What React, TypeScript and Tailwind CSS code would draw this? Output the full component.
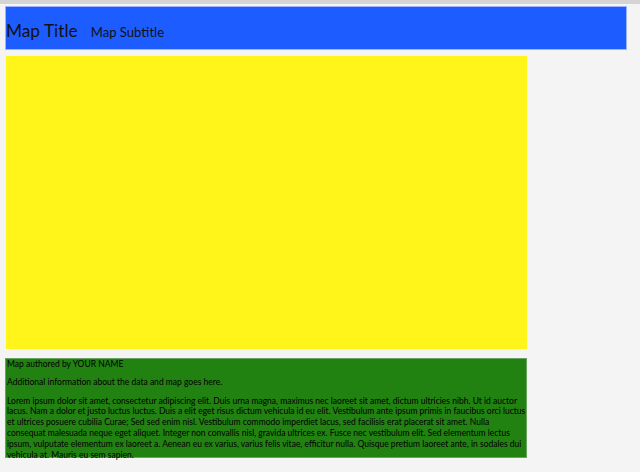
export default function App() {
  return (
    <div className="min-h-[472px] bg-[#f4f4f4] font-['Lato','Open_Sans',sans-serif] text-[#111]">
      <div className="h-[4px] bg-[#d4d4d4]" />
      <div className="px-[5px] pt-[2px]">
        {/* Header */}
        <header className="flex h-[44px] w-[622px] items-baseline gap-[13px] border border-[#9fb2ff] bg-[#1d5cff] pt-[15px]">
          <h1 className="text-[17.3px] leading-none">Map Title</h1>
          <h2 className="text-[13.1px] leading-none">Map Subtitle</h2>
        </header>

        {/* Map */}
        <div className="ml-[1px] mt-[6px] h-[293px] w-[521px] bg-[#fff51a]" />

        {/* Info */}
        <div className="mt-[9px] h-[100px] w-[522px] border border-[#6aa35f] bg-[#228211] pl-[1px] text-[8.53px] leading-[10.8px] text-black">
          <p>Map authored by YOUR NAME</p>
          <p className="mt-[7.5px]">Additional information about the data and map goes here.</p>
          <p className="mt-[7.5px]">
            Lorem ipsum dolor sit amet, consectetur adipiscing elit. Duis urna magna, maximus nec laoreet sit amet,
            dictum ultricies nibh. Ut id auctor lacus. Nam a dolor et justo luctus luctus. Duis a elit eget risus
            dictum vehicula id eu elit. Vestibulum ante ipsum primis in faucibus orci luctus et ultrices posuere
            cubilia Curae; Sed sed enim nisl. Vestibulum commodo imperdiet lacus, sed facilisis erat placerat sit
            amet. Nulla consequat malesuada neque eget aliquet. Integer non convallis nisl, gravida ultrices ex. Fusce
            nec vestibulum elit. Sed elementum lectus ipsum, vulputate elementum ex laoreet a. Aenean eu ex varius,
            varius felis vitae, efficitur nulla. Quisque pretium laoreet ante, in sodales dui vehicula at. Mauris eu
            sem sapien.
          </p>
        </div>
      </div>
    </div>
  );
}
